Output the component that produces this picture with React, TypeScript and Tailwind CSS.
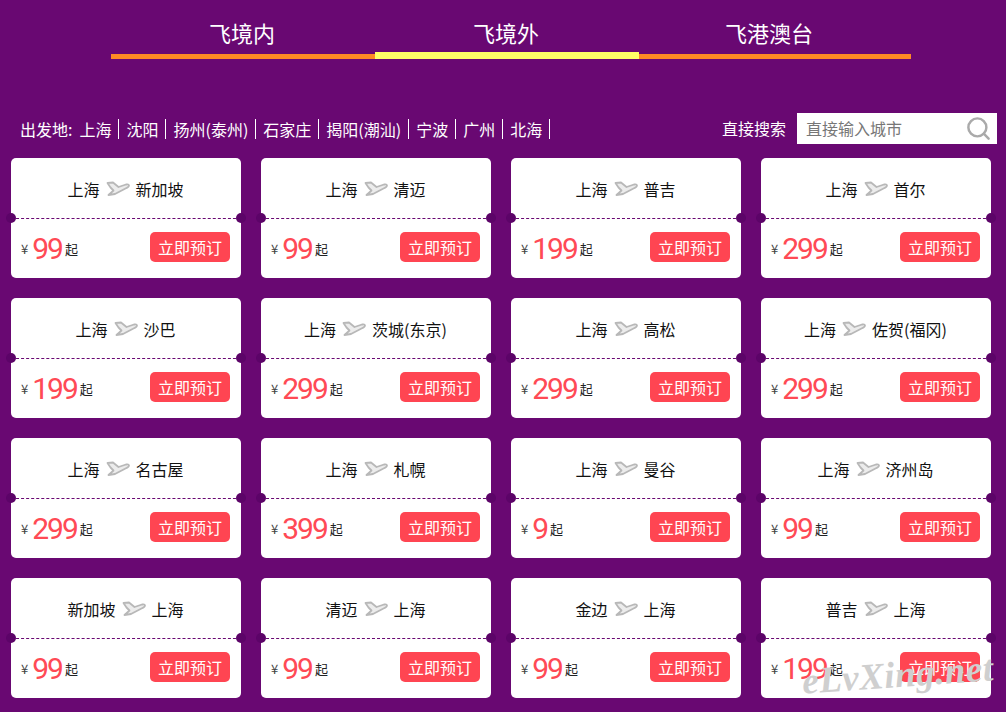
import React from "react";
import { Search } from "lucide-react";

const cities = ["上海", "沈阳", "扬州(泰州)", "石家庄", "揭阳(潮汕)", "宁波", "广州", "北海"];

const flights = [
  ["上海", "新加坡", "99"],
  ["上海", "清迈", "99"],
  ["上海", "普吉", "199"],
  ["上海", "首尔", "299"],
  ["上海", "沙巴", "199"],
  ["上海", "茨城(东京)", "299"],
  ["上海", "高松", "299"],
  ["上海", "佐贺(福冈)", "299"],
  ["上海", "名古屋", "299"],
  ["上海", "札幌", "399"],
  ["上海", "曼谷", "9"],
  ["上海", "济州岛", "99"],
  ["新加坡", "上海", "99"],
  ["清迈", "上海", "99"],
  ["金边", "上海", "99"],
  ["普吉", "上海", "199"],
];

const Plane = () => (
  <svg width="24" height="16" viewBox="0 0 24 16" className="mx-[6px] shrink-0">
    <path
      d="M1.5 2 L7 1.5 L12.5 6 L20 3.5 Q23 3 23 4.5 Q23 6 19.5 7.5 L9 13 L2.5 14 L7.5 9.5 L4.5 6.5 Z"
      fill="#ececec"
      stroke="#b8b8b8"
      strokeWidth="1.8"
      strokeLinejoin="round"
    />
  </svg>
);

const Card = ({ from, to, price }: { from: string; to: string; price: string }) => (
  <div className="relative h-[120px] w-[230px] rounded-[5px] bg-white">
    <div className="flex h-[61px] items-center justify-center border-b border-dashed border-[#690872] pt-[2px] text-[16px] leading-[24px] text-[#111]">
      <span className="ml-[-1px]">{from}</span>
      <Plane />
      <span>{to}</span>
    </div>
    <span className="absolute left-[-5px] top-[55px] h-[10px] w-[10px] rounded-full bg-[#5c0468]" />
    <span className="absolute right-[-5px] top-[55px] h-[10px] w-[10px] rounded-full bg-[#5c0468]" />
    <div className="flex h-[59px] items-center justify-between pb-[3px] pl-[10px] pr-[11px]">
      <div className="flex items-center pt-[4px]">
        <span className="mr-[4px] text-[13px] leading-[20px] text-[#444]">¥</span>
        <span
          className="text-[30px] font-normal leading-none tracking-[-2px] text-[#ff4a55]"
          style={{ fontFamily: 'Roboto, "Noto Sans CJK SC", sans-serif' }}
        >
          {price}
        </span>
        <span className="ml-[3px] text-[13px] leading-[20px] text-[#222]">起</span>
      </div>
      <button className="h-[30px] w-[80px] rounded-[5px] bg-[#ff4552] text-center text-[16px] leading-[30px] text-white">
        立即预订
      </button>
    </div>
  </div>
);

export default function App() {
  return (
    <div
      className="relative h-[712px] w-[1006px] overflow-hidden bg-[#690872]"
      style={{ fontFamily: '"Noto Sans CJK SC", "Liberation Sans", sans-serif' }}
    >
      <div className="ml-[111px] flex h-[59px] items-end text-[22px] text-white">
        <div className="flex h-[37px] w-[264px] items-start justify-center border-b-[5px] border-[#ff8a24] pr-[2px] leading-[20px]">飞境内</div>
        <div className="flex h-[39px] w-[264px] items-start justify-center border-b-[7px] border-[#ffff66] pr-[2px] leading-[24px]">飞境外</div>
        <div className="flex h-[37px] w-[272px] items-start justify-center border-b-[5px] border-[#ff8a24] pr-[12px] leading-[20px]">飞港澳台</div>
      </div>

      <div className="flex h-[99px] items-end justify-between pb-[15px] pl-[20px] pr-[9px] text-[16px] text-white">
        <div className="mb-[2px] flex items-center">
          <span className="mr-[7px]">出发地:</span>
          {cities.map((city, i) => (
            <span
              key={city}
              className={`flex h-[20px] items-center border-r border-white leading-[20px] ${i === 0 ? "pr-[7px]" : "px-[7px]"}`}
            >
              {city}
            </span>
          ))}
        </div>
        <div className="mb-[-1px] flex items-center">
          <span className="mb-[1px] mr-[11px]">直接搜索</span>
          <div className="flex h-[31px] w-[200px] items-center justify-between bg-white pl-[9px] pr-[5px]">
            <span className="mb-[1px] text-[#777]">直接输入城市</span>
            <Search size={27} strokeWidth={2.2} className="text-[#aaa]" />
          </div>
        </div>
      </div>

      <div className="ml-[11px] grid grid-cols-[repeat(4,230px)] gap-x-[20px] gap-y-[20px]">
        {flights.map(([from, to, price]) => (
          <Card key={from + to} from={from} to={to} price={price} />
        ))}
      </div>

      <div
        className="absolute left-[802px] top-[656px] rotate-[-4deg] text-[37px] font-bold italic leading-none tracking-[0.5px] text-[#cfcfcf]"
        style={{ fontFamily: '"Liberation Serif", serif' }}
      >
        eLvXing.net
      </div>
    </div>
  );
}
